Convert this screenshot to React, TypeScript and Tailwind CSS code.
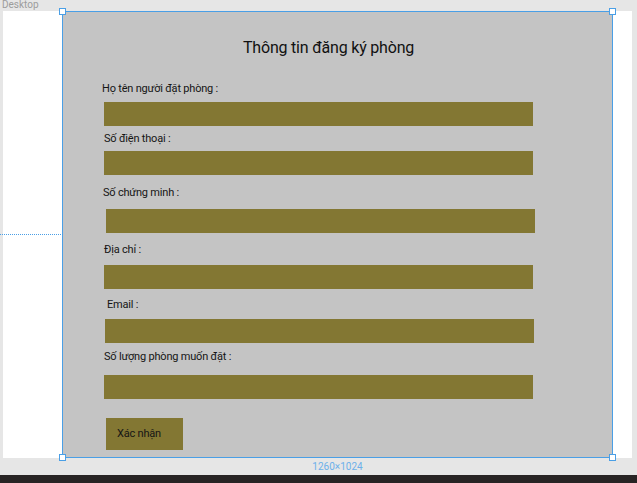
const fields = [
  { label: "Họ tên người đặt phòng :", labelX: "ml-[-2px]", barX: "ml-0", top: "mt-[24px]", gap: "mt-[6px]" },
  { label: "Số điện thoại :", labelX: "ml-0", barX: "ml-0", top: "mt-[6px]", gap: "mt-[5px]" },
  { label: "Số chứng minh :", labelX: "ml-[-1px]", barX: "ml-[2px]", top: "mt-[11px]", gap: "mt-[9px]" },
  { label: "Địa chỉ :", labelX: "ml-0", barX: "ml-0", top: "mt-[10px]", gap: "mt-[8px]" },
  { label: "Email :", labelX: "ml-[3px]", barX: "ml-[1px]", top: "mt-[9px]", gap: "mt-[7px]" },
  { label: "Số lượng phòng muốn đặt :", labelX: "ml-0", barX: "ml-0", top: "mt-[7px]", gap: "mt-[11px]" },
];

function Handle({ pos }: { pos: string }) {
  return (
    <div
      className={`absolute w-[7px] h-[7px] bg-white border border-[#4a9fe6] ${pos}`}
    />
  );
}

export default function App() {
  return (
    <div
      className="relative w-[637px] h-[483px] overflow-hidden bg-[#e6e6e6] flex flex-col"
      style={{ fontFamily: "Roboto, 'Noto Sans', sans-serif" }}
    >
      {/* top label */}
      <div className="h-[11px] pl-[2px] text-[10px] leading-[10px] text-[#9c9c9c]">
        Desktop
      </div>

      {/* canvas row */}
      <div className="flex flex-row h-[447px]">
        <div className="w-[3px] bg-[#e6e6e6]" />
        <div className="flex-1 bg-white flex flex-row">
          <div className="w-[59px]" />
          <div className="relative w-[551px] h-[447px] border-[1.5px] border-[#4a9fe6] bg-[#c4c4c4] flex flex-col pl-[41px] pt-[26px]">
            <h1 className="pl-[139px] text-[16px] leading-[20px] tracking-[-0.2px] text-[#111]">
              Thông tin đăng ký phòng
            </h1>
            {fields.map((f) => (
              <div key={f.label} className={`flex flex-col ${f.top}`}>
                <p className={`text-[11px] leading-[14px] tracking-[-0.2px] text-[#151515] ${f.labelX}`}>
                  {f.label}
                </p>
                <div className={`${f.gap} ${f.barX} w-[429px] h-[24px] bg-[#837733]`} />
              </div>
            ))}
            <button className="mt-[19px] ml-[2px] w-[77px] h-[32px] bg-[#837733] text-left pl-[11px] text-[11px] tracking-[-0.2px] text-[#151515]">
              Xác nhận
            </button>
            <Handle pos="-top-[4px] -left-[4px]" />
            <Handle pos="-top-[4px] -right-[4px]" />
            <Handle pos="-bottom-[4px] -left-[4px]" />
            <Handle pos="-bottom-[4px] -right-[4px]" />
          </div>
        </div>
        <div className="w-[5px] bg-[#e6e6e6]" />
      </div>

      {/* size label */}
      <div className="h-[17px] flex items-center justify-center pl-[38px] text-[10px] text-[#6cb0ea]">
        1260×1024
      </div>
      <div className="flex-1 bg-[#282424]" />

      {/* guide line */}
      <div className="absolute left-0 top-[234px] w-[61px] border-t border-dotted border-[#4a9fe6]" />
    </div>
  );
}
